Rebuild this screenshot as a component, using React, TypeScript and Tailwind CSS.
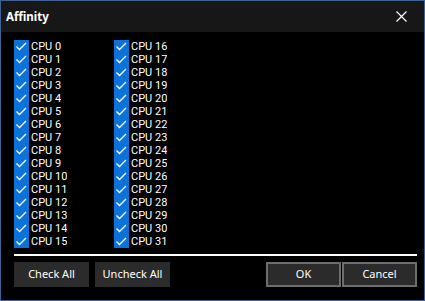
import React from 'react';

const left = Array.from({ length: 16 }, (_, i) => i);
const right = Array.from({ length: 16 }, (_, i) => i + 16);

const Check = () => (
  <svg width="15" height="13" viewBox="0 0 15 13" className="block">
    <path d="M2.5 6.5 L5.5 9.5 L12 3" stroke="#fff" strokeWidth="1.3" fill="none" />
  </svg>
);

const CpuColumn: React.FC<{ items: number[] }> = ({ items }) => (
  <div className="flex flex-col w-[100px]">
    {items.map((n) => (
      <label key={n} className="flex items-center h-[13px]">
        <span className="w-[15px] h-[13px] bg-[#0a72d8]">
          <Check />
        </span>
        <span
          className="block ml-[2px] h-[13px] overflow-hidden text-[11px] leading-[13px] text-white"
          style={{ fontFamily: 'Roboto, "Noto Sans", sans-serif' }}
        >
          CPU {n}
        </span>
      </label>
    ))}
  </div>
);

const App: React.FC = () => {
  return (
    <div
      className="w-[425px] h-[301px] border border-[#3d6296] bg-black flex flex-col"
      style={{ fontFamily: '"Noto Sans", "Open Sans", sans-serif' }}
    >
      {/* Title bar */}
      <div className="h-[31px] bg-[#171717] flex items-center justify-between pl-[5px] pr-[17px]">
        <span className="text-white font-bold text-[11.5px]">Affinity</span>
        <svg width="11" height="11" viewBox="0 0 11 11">
          <path d="M0.5 0.5 L10.5 10.5 M10.5 0.5 L0.5 10.5" stroke="#fff" strokeWidth="1.2" />
        </svg>
      </div>

      {/* CPU list */}
      <div className="flex pl-[13px] pt-[8px]">
        <CpuColumn items={left} />
        <CpuColumn items={right} />
      </div>

      <div className="ml-[13px] mr-[7px] mt-[6px] h-[2px] bg-white" />

      {/* Buttons */}
      <div className="flex justify-between pl-[13px] pr-[7px] mt-[6px]">
        <div className="flex gap-[6px]">
          <button className="w-[75px] h-[25px] bg-[#2b2b2b] text-white text-[11px]">Check All</button>
          <button className="w-[75px] h-[25px] bg-[#2b2b2b] text-white text-[11px]">Uncheck All</button>
        </div>
        <div className="flex gap-[1px]">
          <button className="w-[75px] h-[25px] bg-[#2b2b2b] border-2 border-[#6d6d6d] text-white text-[11px]">OK</button>
          <button className="w-[75px] h-[25px] bg-[#2b2b2b] border-2 border-[#6d6d6d] text-white text-[11px]">Cancel</button>
        </div>
      </div>
    </div>
  );
};

export default App;
